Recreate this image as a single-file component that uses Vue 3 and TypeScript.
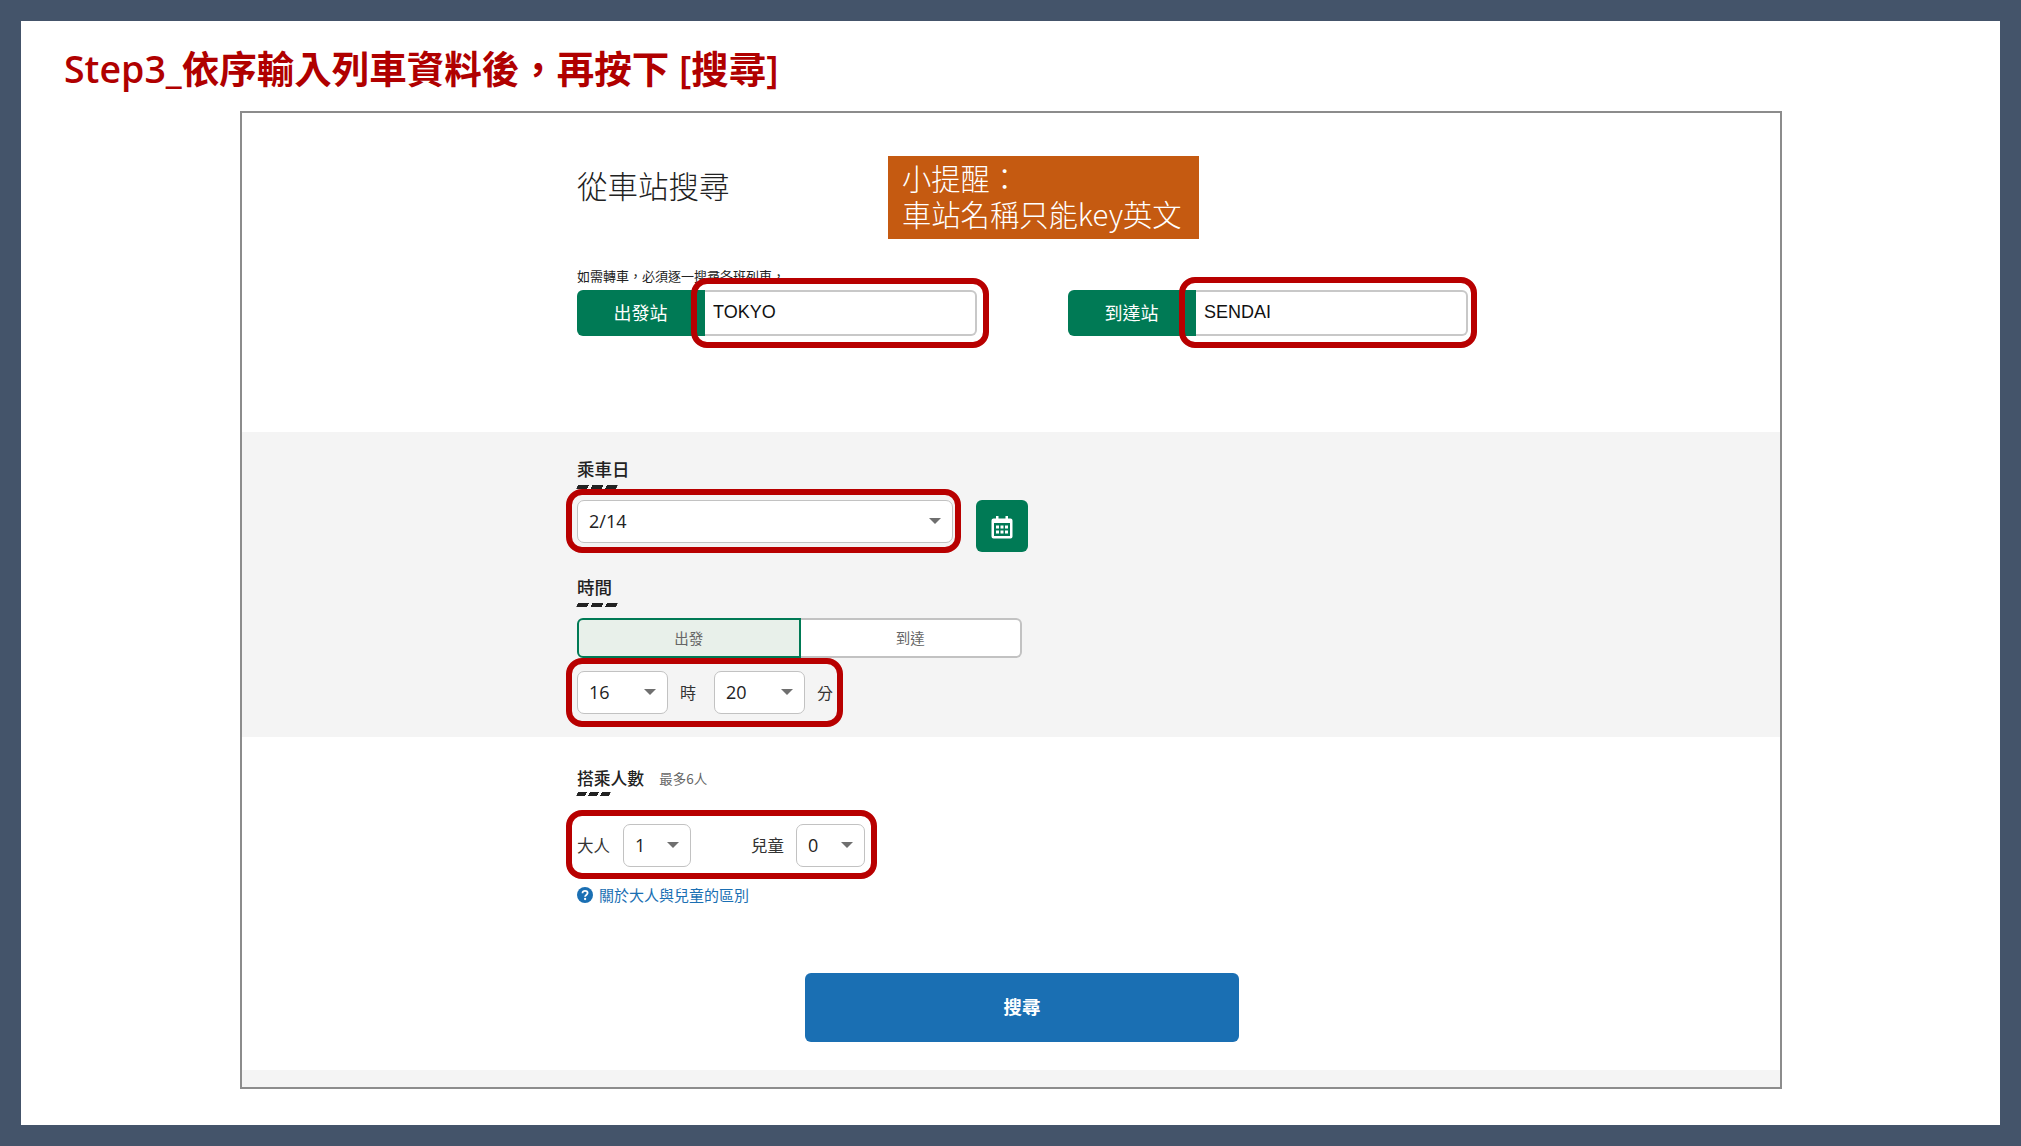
<script setup lang="ts">
import { ref } from 'vue'

const from = ref('TOKYO')
const to = ref('SENDAI')
const date = ref('2/14')
const hour = ref('16')
const minute = ref('20')
const adults = ref('1')
const children = ref('0')
</script>

<template>
  <div class="slide">
    <h1 class="title">Step3_依序輸入列車資料後，再按下 [搜尋]</h1>
    <main class="frame">
      <section class="band stations">
        <div class="head-row">
          <h2 class="heading">從車站搜尋</h2>
          <div class="tip">小提醒：<br />車站名稱只能key英文</div>
        </div>
        <p class="note">如需轉車，必須逐一搜尋各班列車，</p>
        <div class="station-row">
          <div class="station">
            <span class="station-label">出發站</span>
            <input v-model="from" class="station-input" />
            <span class="mark mark-from"></span>
          </div>
          <div class="station">
            <span class="station-label">到達站</span>
            <input v-model="to" class="station-input" />
            <span class="mark mark-to"></span>
          </div>
        </div>
      </section>

      <section class="band gray schedule">
        <h3 class="label">乘車日</h3>
        <div class="dashes"></div>
        <div class="date-row">
          <div class="marked">
            <div class="select date-select">
              <select v-model="date"><option>2/14</option></select>
            </div>
            <span class="mark mark-date"></span>
          </div>
          <button class="cal" type="button" aria-label="日曆">
            <svg width="22" height="24" viewBox="0 0 22 24">
              <path fill="#fff" d="M5 1h2.500v2.500h7V1H17v2.500h2.500a2 2 0 0 1 2 2v16a2 2 0 0 1-2 2h-17a2 2 0 0 1-2-2v-16a2 2 0 0 1 2-2H5z" />
              <rect x="3" y="8" width="16" height="13" fill="#007a55" />
              <g fill="#fff">
                <rect x="5" y="10.500" width="3" height="3" />
                <rect x="9.500" y="10.500" width="3" height="3" />
                <rect x="14" y="10.500" width="3" height="3" />
                <rect x="5" y="15.500" width="3" height="3" />
                <rect x="9.500" y="15.500" width="3" height="3" />
                <rect x="14" y="15.500" width="3" height="3" />
              </g>
            </svg>
          </button>
        </div>

        <h3 class="label time-label">時間</h3>
        <div class="dashes"></div>
        <div class="toggle">
          <button class="toggle-btn on" type="button">出發</button>
          <button class="toggle-btn off" type="button">到達</button>
        </div>
        <div class="marked time-row">
          <div class="select time-select">
            <select v-model="hour"><option>16</option></select>
          </div>
          <span class="unit">時</span>
          <div class="select time-select">
            <select v-model="minute"><option>20</option></select>
          </div>
          <span class="unit">分</span>
          <span class="mark mark-time"></span>
        </div>
      </section>

      <section class="band passengers">
        <div class="label-line">
          <h3 class="label count-label">搭乘人數</h3>
          <span class="hint">最多6人</span>
        </div>
        <div class="dashes short"></div>
        <div class="marked people-row">
          <span class="person">大人</span>
          <div class="select people-select">
            <select v-model="adults"><option>1</option></select>
          </div>
          <span class="person second">兒童</span>
          <div class="select people-select">
            <select v-model="children"><option>0</option></select>
          </div>
          <span class="mark mark-people"></span>
        </div>
        <a class="help" href="#">
          <svg width="16" height="16" viewBox="0 0 16 16">
            <circle cx="8" cy="8" r="8" fill="#1a6fb3" />
            <path d="M5.500 6.200C5.500 4.700 6.600 3.800 8 3.800s2.600.9 2.600 2.200c0 1.900-2.500 1.900-2.500 3.700" fill="none" stroke="#fff" stroke-width="1.800" />
            <circle cx="8.100" cy="12" r="1.150" fill="#fff" />
          </svg>
          <span>關於大人與兒童的區別</span>
        </a>
        <div class="submit-row">
          <button class="submit" type="button">搜尋</button>
        </div>
      </section>

      <div class="band gray footer"></div>
    </main>
  </div>
</template>

<style>
html,
body {
  margin: 0;
  background: #44546a;
}
</style>

<style scoped>
.slide {
  box-sizing: border-box;
  width: 1979px;
  height: 1104px;
  margin: 21px 0 0 21px;
  padding: 22px 0 0 43px;
  background: #fff;
  font-family: "Noto Sans CJK TC", "Open Sans", sans-serif;
}
.title {
  margin: 0;
  height: 68px;
  font-family: "Open Sans", "Noto Sans CJK TC", sans-serif;
  font-size: 37.500px;
  line-height: 52px;
  font-weight: 600;
  color: #b00000;
  white-space: nowrap;
}
.frame {
  box-sizing: border-box;
  display: flex;
  flex-direction: column;
  width: 1542px;
  height: 978px;
  margin-left: 176px;
  border: 2px solid #8c8c8c;
  background: #fff;
}
.band {
  box-sizing: border-box;
  padding-left: 335px;
}
.gray {
  background: #f4f4f4;
}
.stations {
  height: 319px;
  padding-top: 43px;
}
.head-row {
  display: flex;
  height: 83px;
}
.heading {
  width: 311px;
  margin: 0;
  font-size: 30.500px;
  line-height: 58px;
  font-weight: 300;
  color: #222;
}
.tip {
  box-sizing: border-box;
  width: 311px;
  height: 83px;
  padding: 3px 14px 0;
  background: #c55a11;
  color: #fff;
  font-size: 29.300px;
  line-height: 36px;
  font-weight: 300;
  white-space: nowrap;
}
.note {
  margin: 28px 0 0;
  font-size: 13px;
  line-height: 17px;
  color: #222;
  white-space: nowrap;
}
.station-row {
  display: flex;
  gap: 91px;
  margin-top: 6px;
}
.station {
  position: relative;
  display: flex;
  width: 400px;
  height: 46px;
}
.station-label {
  display: flex;
  align-items: center;
  justify-content: center;
  box-sizing: border-box;
  width: 128px;
  padding: 0 1px 2px 0;
  background: #007a55;
  border-radius: 6px 0 0 6px;
  color: #fff;
  font-size: 18px;
}
.station-input {
  box-sizing: border-box;
  width: 272px;
  height: 46px;
  padding: 0 8px 1px;
  border: 2px solid #c8c8c8;
  border-left: 0;
  border-radius: 0 6px 6px 0;
  outline: none;
  background: #fff;
  color: #111;
  font-family: "Liberation Sans", sans-serif;
  font-size: 18px;
}
.mark {
  position: absolute;
  box-sizing: border-box;
  border: 6px solid #b80000;
  border-radius: 16px;
  pointer-events: none;
}
.mark-from {
  left: 114px;
  top: -12px;
  width: 298px;
  height: 70px;
}
.mark-to {
  left: 111px;
  top: -13px;
  width: 298px;
  height: 71px;
}
.schedule {
  height: 305px;
  padding-top: 26px;
}
.label {
  margin: 0;
  font-size: 17.500px;
  line-height: 22px;
  font-weight: 500;
  color: #222;
}
.count-label {
  font-size: 16.800px;
}
.dashes {
  width: 40px;
  height: 4px;
  margin-top: 5px;
  background: repeating-linear-gradient(90deg, #222 0 11px, transparent 11px 14.500px);
  transform: skewX(-20deg);
}
.dashes.short {
  width: 33px;
  margin-top: 2px;
  background: repeating-linear-gradient(90deg, #222 0 9px, transparent 9px 12px);
}
.date-row {
  display: flex;
  gap: 23px;
  margin-top: 11px;
}
.marked {
  position: relative;
}
.select {
  position: relative;
  box-sizing: border-box;
  height: 43px;
  border: 1.500px solid #c2c2c2;
  border-radius: 7px;
  background: #fff;
}
.select select {
  display: block;
  box-sizing: border-box;
  width: 100%;
  height: 100%;
  padding: 0 0 2px 11px;
  border: 0;
  outline: none;
  background: transparent;
  appearance: none;
  color: #222;
  font-family: "Open Sans", sans-serif;
  font-size: 18px;
}
.select::after {
  content: "";
  position: absolute;
  top: 17px;
  right: 11px;
  border-left: 6px solid transparent;
  border-right: 6px solid transparent;
  border-top: 6px solid #6f6f6f;
  pointer-events: none;
}
.date-select {
  width: 376px;
}
.mark-date {
  left: -11px;
  top: -11px;
  width: 395px;
  height: 64px;
}
.cal {
  display: flex;
  align-items: center;
  justify-content: center;
  box-sizing: border-box;
  width: 52px;
  height: 52px;
  padding: 2px 0 0;
  border: 0;
  border-radius: 6px;
  background: #007a55;
}
.time-label {
  margin-top: 24px;
}
.toggle {
  display: flex;
  width: 445px;
  height: 40px;
  margin-top: 11px;
}
.toggle-btn {
  flex: 1;
  box-sizing: border-box;
  padding: 0 0 1px;
  font-family: inherit;
  font-size: 14.500px;
  color: #666;
}
.toggle-btn.on {
  border: 2px solid #007a55;
  border-radius: 6px 0 0 6px;
  background: #e8f0ea;
}
.toggle-btn.off {
  border: 2px solid #c2c2c2;
  border-left: 0;
  border-radius: 0 6px 6px 0;
  background: #fff;
}
.time-row {
  display: flex;
  align-items: center;
  margin-top: 13px;
  width: 256px;
}
.time-select {
  flex: none;
  width: 91px;
}
.unit {
  flex: none;
  box-sizing: border-box;
  width: 46px;
  padding: 0 0 2px 12px;
  font-size: 16px;
  color: #333;
}
.mark-time {
  left: -11px;
  top: -13px;
  width: 277px;
  height: 69px;
}
.passengers {
  height: 333px;
  padding-top: 29px;
}
.label-line {
  display: flex;
  align-items: center;
  gap: 15px;
  height: 24px;
}
.hint {
  font-size: 13.500px;
  color: #666;
}
.people-row {
  display: flex;
  align-items: center;
  width: 288px;
  margin-top: 28px;
}
.person {
  flex: none;
  padding-bottom: 2px;
  font-size: 16.500px;
  color: #333;
}
.person.second {
  margin-left: 60px;
}
.people-select {
  flex: none;
  width: 68px;
  margin-left: 13px;
}
.second + .people-select {
  width: 69px;
  margin-left: 12px;
}
.mark-people {
  left: -11px;
  top: -14px;
  width: 311px;
  height: 69px;
}
.help {
  display: flex;
  align-items: center;
  gap: 6px;
  margin-top: 19px;
  height: 17px;
  color: #1a6fb3;
  font-size: 15px;
  text-decoration: none;
}
.submit-row {
  margin-top: 70px;
  padding-left: 228px;
}
.submit {
  display: block;
  width: 434px;
  height: 69px;
  padding: 0 0 3px;
  border: 0;
  border-radius: 6px;
  background: #1a6fb3;
  color: #fff;
  font-family: inherit;
  font-size: 18.500px;
  font-weight: 700;
}
.footer {
  flex: 1;
}
</style>
